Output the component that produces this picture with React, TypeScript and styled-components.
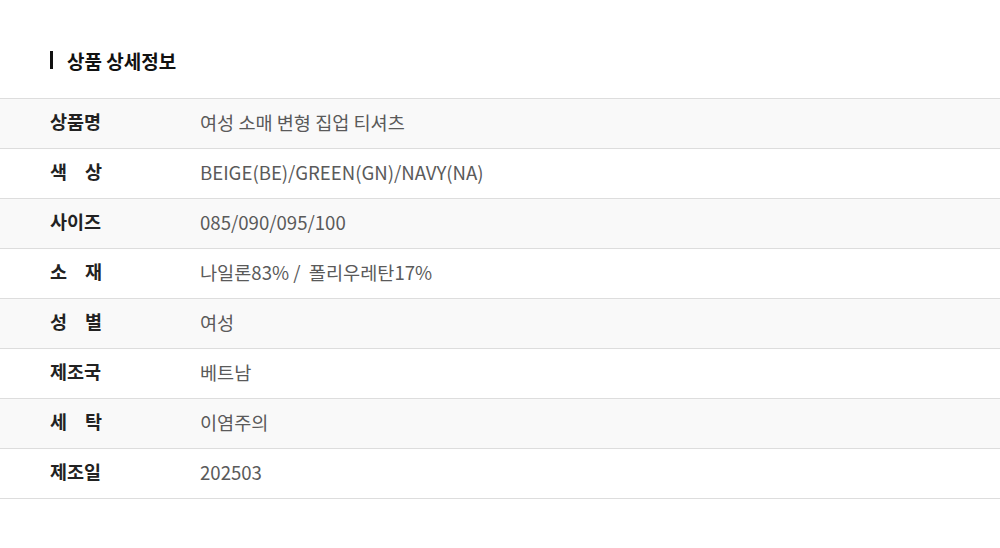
import React from 'react'
import styled, { createGlobalStyle } from 'styled-components'

const GlobalStyle = createGlobalStyle`
  html, body {
    margin: 0;
    padding: 0;
    background: #fff;
  }
  body {
    font-family: 'Noto Sans CJK KR', 'Noto Sans', sans-serif;
  }
`

const rows: { label: string; value: string }[] = [
  { label: '상품명', value: '여성 소매 변형 집업 티셔츠' },
  { label: '색 상', value: 'BEIGE(BE)/GREEN(GN)/NAVY(NA)' },
  { label: '사이즈', value: '085/090/095/100' },
  { label: '소 재', value: '나일론83% /  폴리우레탄17%' },
  { label: '성 별', value: '여성' },
  { label: '제조국', value: '베트남' },
  { label: '세 탁', value: '이염주의' },
  { label: '제조일', value: '202503' },
]

const Page = styled.div`
  width: 1000px;
  height: 548px;
  padding-top: 47px;
  box-sizing: border-box;
`

const Title = styled.h2`
  display: flex;
  align-items: center;
  gap: 14px;
  margin: 0 0 25px 50px;
  height: 26px;
  font-size: 19px;
  font-weight: 700;
  color: #111;

  &::before {
    content: '';
    width: 3px;
    height: 18px;
    background: #111;
  }
`

const Table = styled.div`
  border-top: 1px solid #ddd;
`

const Row = styled.div<{ $shaded: boolean }>`
  display: flex;
  align-items: center;
  height: 50px;
  padding-bottom: 5px;
  box-sizing: border-box;
  border-bottom: 1px solid #ddd;
  background: ${(p) => (p.$shaded ? '#f9f9f9' : '#fff')};
`

const Label = styled.div`
  width: 52px;
  margin-left: 50px;
  margin-right: 98px;
  font-size: 18.5px;
  font-weight: 700;
  color: #222;
  text-align: justify;
  text-align-last: justify;
  white-space: nowrap;
`

const Value = styled.div`
  font-size: 18.6px;
  font-weight: 400;
  color: #5a5a5a;
  white-space: pre;
`

export default function App() {
  return (
    <Page>
      <GlobalStyle />
      <Title>상품 상세정보</Title>
      <Table>
        {rows.map((r, i) => (
          <Row key={r.label} $shaded={i % 2 === 0}>
            <Label>{r.label}</Label>
            <Value>{r.value}</Value>
          </Row>
        ))}
      </Table>
    </Page>
  )
}
